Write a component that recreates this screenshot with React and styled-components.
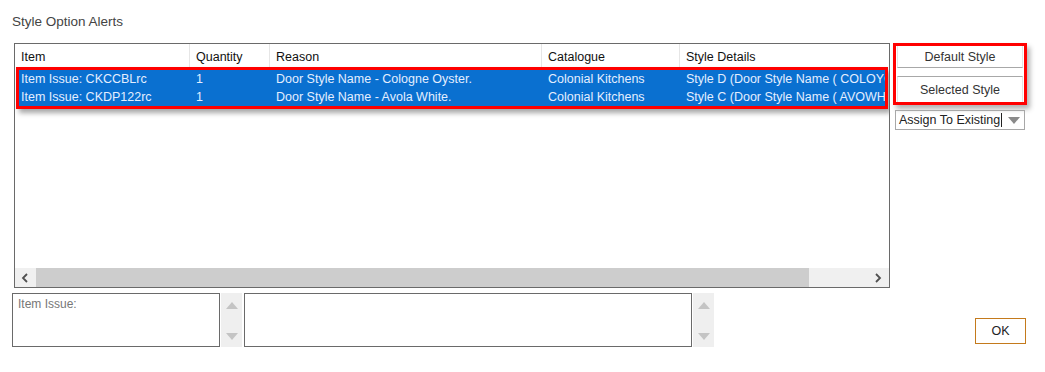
import React from "react";
import styled, { createGlobalStyle } from "styled-components";

const GlobalStyle = createGlobalStyle`
  body {
    margin: 0;
    background: #ffffff;
    font-family: "Liberation Sans", "DejaVu Sans", sans-serif;
  }
`;

const columns = [
  { key: "item", title: "Item", width: 175 },
  { key: "qty", title: "Quantity", width: 80 },
  { key: "reason", title: "Reason", width: 272 },
  { key: "catalogue", title: "Catalogue", width: 138 },
  { key: "details", title: "Style Details", width: 0 },
];

const rows = [
  {
    item: "Item Issue: CKCCBLrc",
    qty: "1",
    reason: "Door Style Name - Cologne Oyster.",
    catalogue: "Colonial Kitchens",
    details: "Style D (Door Style Name ( COLOYCOLOY ) )",
  },
  {
    item: "Item Issue: CKDP122rc",
    qty: "1",
    reason: "Door Style Name - Avola White.",
    catalogue: "Colonial Kitchens",
    details: "Style C (Door Style Name ( AVOWHAVOWH ) )",
  },
];

function Chevron({ left }) {
  return (
    <svg width="8" height="10" viewBox="0 0 8 10">
      <path
        d={left ? "M6 1 L2 5 L6 9" : "M2 1 L6 5 L2 9"}
        fill="none"
        stroke="#505050"
        strokeWidth="1.8"
      />
    </svg>
  );
}

function Triangle({ up, color }) {
  return (
    <svg width="12" height="7" viewBox="0 0 12 7">
      <path d={up ? "M0 7 L6 0 L12 7 Z" : "M0 0 L6 7 L12 0 Z"} fill={color} />
    </svg>
  );
}

export default function App() {
  const headCols = columns.map((c) => (c.width ? `${c.width}px` : "1fr")).join(" ");
  const rowCols = columns
    .map((c, i) => (c.width ? `${i === 0 ? c.width - 4 : c.width}px` : "1fr"))
    .join(" ");

  return (
    <Page>
      <GlobalStyle />
      <Title>Style Option Alerts</Title>
      <MainRow>
        <Grid>
          <HeaderRow $cols={headCols}>
            {columns.map((c) => (
              <HeaderCell key={c.key}>{c.title}</HeaderCell>
            ))}
          </HeaderRow>
          <Body>
            <Highlight>
              {rows.map((r) => (
                <DataRow key={r.item} $cols={rowCols}>
                  {columns.map((c, i) => (
                    <DataCell key={c.key} $first={i === 0}>
                      {r[c.key]}
                    </DataCell>
                  ))}
                </DataRow>
              ))}
            </Highlight>
          </Body>
          <HScroll>
            <ArrowButton>
              <Chevron left />
            </ArrowButton>
            <Thumb />
            <Track />
            <ArrowButton $right>
              <Chevron />
            </ArrowButton>
          </HScroll>
        </Grid>
        <SideColumn>
          <ButtonBox>
            <StyleButton $first>Default Style</StyleButton>
            <StyleButton>Selected Style</StyleButton>
          </ButtonBox>
          <Dropdown>
            <DropText>Assign To Existing</DropText>
            <Caret />
            <DropArrow>
              <Triangle color="#8a8a8a" />
            </DropArrow>
          </Dropdown>
        </SideColumn>
      </MainRow>
      <BottomRow>
        <TextBox $width={208}>Item Issue:</TextBox>
        <Spinner>
          <Triangle up color="#c4c4c4" />
          <Triangle color="#c4c4c4" />
        </Spinner>
        <TextBox $width={448} $gap={2} />
        <Spinner>
          <Triangle up color="#c4c4c4" />
          <Triangle color="#c4c4c4" />
        </Spinner>
        <OkButton>OK</OkButton>
      </BottomRow>
    </Page>
  );
}

const Page = styled.div`
  width: 1045px;
  height: 372px;
  box-sizing: border-box;
  padding: 14px 0 0 12px;
  background: #ffffff;
`;

const Title = styled.div`
  height: 16px;
  line-height: 16px;
  font-size: 13.5px;
  color: #444444;
  margin-bottom: 13px;
`;

const MainRow = styled.div`
  display: flex;
  align-items: flex-start;
`;

const Grid = styled.div`
  margin-left: 2px;
  width: 876px;
  height: 245px;
  box-sizing: border-box;
  border: 1px solid #6a6a6a;
  display: flex;
  flex-direction: column;
  overflow: hidden;
`;

const HeaderRow = styled.div`
  display: grid;
  grid-template-columns: ${(p) => p.$cols};
  height: 23px;
  flex-shrink: 0;
`;

const HeaderCell = styled.div`
  padding: 3px 0 0 6px;
  line-height: 20px;
  font-size: 12.5px;
  color: #111111;
  border-right: 1px solid #e6e6e6;
  white-space: nowrap;
  overflow: hidden;
  &:last-child {
    border-right: none;
  }
`;

const Body = styled.div`
  flex: 1;
`;

const Highlight = styled.div`
  margin-left: 1px;
  width: 872px;
  box-sizing: border-box;
  border: 3px solid #ff0000;
  background: #0a70d0;
  box-shadow: 3px 4px 5px rgba(0, 0, 0, 0.35);
`;

const DataRow = styled.div`
  display: grid;
  grid-template-columns: ${(p) => p.$cols};
  height: 18px;
`;

const DataCell = styled.div`
  padding-left: ${(p) => (p.$first ? "2px" : "6px")};
  line-height: 19px;
  font-size: 12.5px;
  color: #e4eeff;
  white-space: nowrap;
  overflow: hidden;
`;

const HScroll = styled.div`
  display: flex;
  height: 19px;
  flex-shrink: 0;
  background: #f0f0f0;
`;

const ArrowButton = styled.div`
  width: ${(p) => (p.$right ? "22px" : "20px")};
  display: flex;
  align-items: center;
  justify-content: center;
`;

const Thumb = styled.div`
  margin-left: 1px;
  width: 773px;
  background: #cdcdcd;
`;

const Track = styled.div`
  flex: 1;
`;

const SideColumn = styled.div`
  margin-left: 3px;
  width: 134px;
  display: flex;
  flex-direction: column;
`;

const ButtonBox = styled.div`
  box-sizing: border-box;
  height: 62px;
  border: 3px solid #ff0000;
  padding: 0 1px;
  background: #ffffff;
  box-shadow: 3px 4px 5px rgba(0, 0, 0, 0.3);
  display: flex;
  flex-direction: column;
  justify-content: space-between;
`;

const StyleButton = styled.div`
  box-sizing: border-box;
  height: ${(p) => (p.$first ? "22px" : "26px")};
  padding-top: ${(p) => (p.$first ? "3px" : "5px")};
  line-height: 16px;
  text-align: center;
  font-size: 12.5px;
  color: #333333;
  border-left: 1px solid #e4e4e4;
  border-right: 1px solid #e4e4e4;
  ${(p) => (p.$first ? "border-bottom: 1px solid #a8a8a8;" : "border-top: 1px solid #a8a8a8;")}
`;

const Dropdown = styled.div`
  margin-top: 5px;
  margin-left: 2px;
  width: 130px;
  height: 20px;
  box-sizing: border-box;
  border: 1px solid #a8a8a8;
  display: flex;
  align-items: center;
`;

const DropText = styled.div`
  padding-left: 3px;
  font-size: 12.5px;
  color: #222222;
  white-space: nowrap;
`;

const Caret = styled.div`
  width: 1px;
  height: 14px;
  margin-left: 1px;
  background: #222222;
`;

const DropArrow = styled.div`
  margin-left: auto;
  margin-right: 4px;
  display: flex;
`;

const BottomRow = styled.div`
  display: flex;
  align-items: flex-start;
  margin-top: 5px;
`;

const TextBox = styled.div`
  margin-left: ${(p) => p.$gap || 0}px;
  width: ${(p) => p.$width}px;
  height: 54px;
  box-sizing: border-box;
  border: 1px solid #6a6a6a;
  padding: 3px 5px;
  font-size: 12px;
  color: #777777;
`;

const Spinner = styled.div`
  margin-left: 1px;
  width: 21px;
  height: 54px;
  box-sizing: border-box;
  background: #efefef;
  display: flex;
  flex-direction: column;
  align-items: center;
  justify-content: space-between;
  padding: 9px 0 7px;
`;

const OkButton = styled.div`
  margin-left: auto;
  margin-right: 19px;
  margin-top: 25px;
  width: 51px;
  height: 26px;
  box-sizing: border-box;
  border: 1px solid #c47a1c;
  display: flex;
  align-items: center;
  justify-content: center;
  font-size: 12.5px;
  color: #222222;
`;
